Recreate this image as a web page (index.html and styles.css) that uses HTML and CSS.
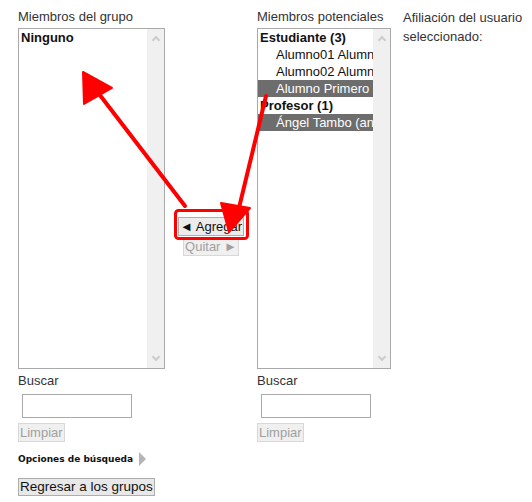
FILE: index.html
```html
<!DOCTYPE html>
<html>
<head>
<meta charset="utf-8">
<link rel="stylesheet" href="styles.css">
</head>
<body>
<div class="page">
  <div class="cols">
    <div class="col col-members">
      <div class="label">Miembros del grupo</div>
      <div class="listbox lb-left">
        <div class="options">
          <div class="opt group">Ninguno</div>
        </div>
        <div class="scrollbar"><span class="chev up"></span><span class="chev down"></span></div>
      </div>
      <div class="label search-label">Buscar</div>
      <input class="search" type="text">
      <button class="btn disabled">Limpiar</button>
    </div>
    <div class="col col-actions">
      <button class="btn add">&#9668; Agregar</button>
      <button class="btn disabled remove">Quitar &#9658;</button>
    </div>
    <div class="col col-potential">
      <div class="label">Miembros potenciales</div>
      <div class="listbox lb-right">
        <div class="options">
          <div class="opt group">Estudiante (3)</div>
          <div class="opt item">Alumno01 Alumno01</div>
          <div class="opt item">Alumno02 Alumno02</div>
          <div class="opt item sel">Alumno Primero</div>
          <div class="opt group">Profesor (1)</div>
          <div class="opt item sel">Ángel Tambo (angel)</div>
        </div>
        <div class="scrollbar"><span class="chev up"></span><span class="chev down"></span></div>
      </div>
      <div class="label search-label">Buscar</div>
      <input class="search" type="text">
      <button class="btn disabled">Limpiar</button>
    </div>
    <div class="col col-info">
      <div class="label info">Afiliación del usuario seleccionado:</div>
    </div>
  </div>
  <div class="options-toggle">Opciones de búsqueda <span class="tri"></span></div>
  <button class="btn back">Regresar a los grupos</button>
</div>
<svg class="annot" width="532" height="502" viewBox="0 0 532 502">
  <g stroke="#ff0000" fill="#ff0000" stroke-linecap="round" stroke-linejoin="round">
    <line x1="185" y1="206" x2="96" y2="90" stroke-width="4"/>
    <polygon points="83,72 84,104 112,88" stroke-width="2"/>
    <line x1="266" y1="96" x2="238" y2="212" stroke-width="4"/>
    <polygon points="229,232 221,203 250,208" stroke-width="2"/>
    <rect x="175.5" y="210.5" width="72" height="28" rx="3" fill="none" stroke-width="3"/>
  </g>
</svg>
</body>
</html>
```
FILE: styles.css
```css
html, body {
  margin: 0;
  padding: 0;
  background: #ffffff;
}
body {
  font-family: "Liberation Sans", Arial, sans-serif;
  font-size: 13px;
  color: #222;
  width: 532px;
  height: 502px;
  overflow: hidden;
  position: relative;
}
.page {
  padding: 9px 0 0 18px;
}
.cols {
  display: flex;
  align-items: flex-start;
}
.col {
  display: flex;
  flex-direction: column;
  align-items: flex-start;
}
.col-members { width: 147px; }
.col-actions {
  width: 92px;
  align-items: center;
  padding-top: 208px;
  gap: 1px;
}
.col-potential { width: 134px; }
.col-info {
  margin-left: 12px;
  width: 125px;
}
.label {
  line-height: 16px;
  margin-bottom: 3px;
  color: #333;
  white-space: nowrap;
}
.label.info {
  white-space: normal;
  line-height: 19px;
  margin-top: -1px;
}
.listbox {
  box-sizing: border-box;
  height: 341px;
  border: 1px solid #a9a9a9;
  display: flex;
  background: #fff;
}
.lb-left { width: 147px; }
.lb-right { width: 134px; }
.options {
  flex: 1;
  min-width: 0;
  overflow: hidden;
}
.opt {
  height: 17px;
  line-height: 17px;
  white-space: nowrap;
  overflow: hidden;
  text-overflow: clip;
  color: #111;
}
.opt.group {
  font-weight: bold;
  padding-left: 2px;
}
.opt.item {
  padding-left: 18px;
}
.opt.sel {
  background: #6d6d6d;
  color: #fff;
}
.scrollbar {
  width: 17px;
  flex: none;
  background: #f0f0f0;
  position: relative;
}
.chev {
  position: absolute;
  left: 6px;
  width: 4px;
  height: 4px;
  border-left: 2px solid #cdcdcd;
  border-top: 2px solid #cdcdcd;
}
.chev.up {
  top: 8px;
  transform: rotate(45deg);
}
.chev.down {
  bottom: 8px;
  transform: rotate(225deg);
}
.search-label {
  margin-top: 4px;
  margin-bottom: 5px;
}
.search {
  box-sizing: border-box;
  width: 110px;
  height: 24px;
  margin: 0 0 5px 4px;
  border: 1px solid #a9a9a9;
  padding: 0;
  background: #fff;
}
.btn {
  font-family: "Liberation Sans", Arial, sans-serif;
  font-size: 13px;
  line-height: 15px;
  padding: 1px 1px;
  margin: 0;
  border: 1px solid #adadad;
  background: #e8e8e8;
  color: #111;
  border-radius: 0;
}
.btn.disabled {
  color: #a0a0a0;
  background: #f0f0f0;
  border-color: #d8d8d8;
}
.btn.add {
  background: #ececec;
  color: #111;
  padding: 1px 1px;
}
.options-toggle {
  font-family: "DejaVu Sans", Verdana, sans-serif;
  font-size: 9px;
  font-weight: bold;
  color: #111;
  margin-top: 10px;
  display: flex;
  align-items: center;
  gap: 4px;
  height: 14px;
}
.tri {
  display: inline-block;
  width: 0;
  height: 0;
  border-top: 7px solid transparent;
  border-bottom: 7px solid transparent;
  border-left: 7px solid #b5b5b5;
  margin-left: 2px;
}
.btn.back {
  margin-top: 12px;
  font-size: 13.5px;
  line-height: 16px;
  padding: 0 1px;
}
.annot {
  position: absolute;
  left: 0;
  top: 0;
  pointer-events: none;
}
```
